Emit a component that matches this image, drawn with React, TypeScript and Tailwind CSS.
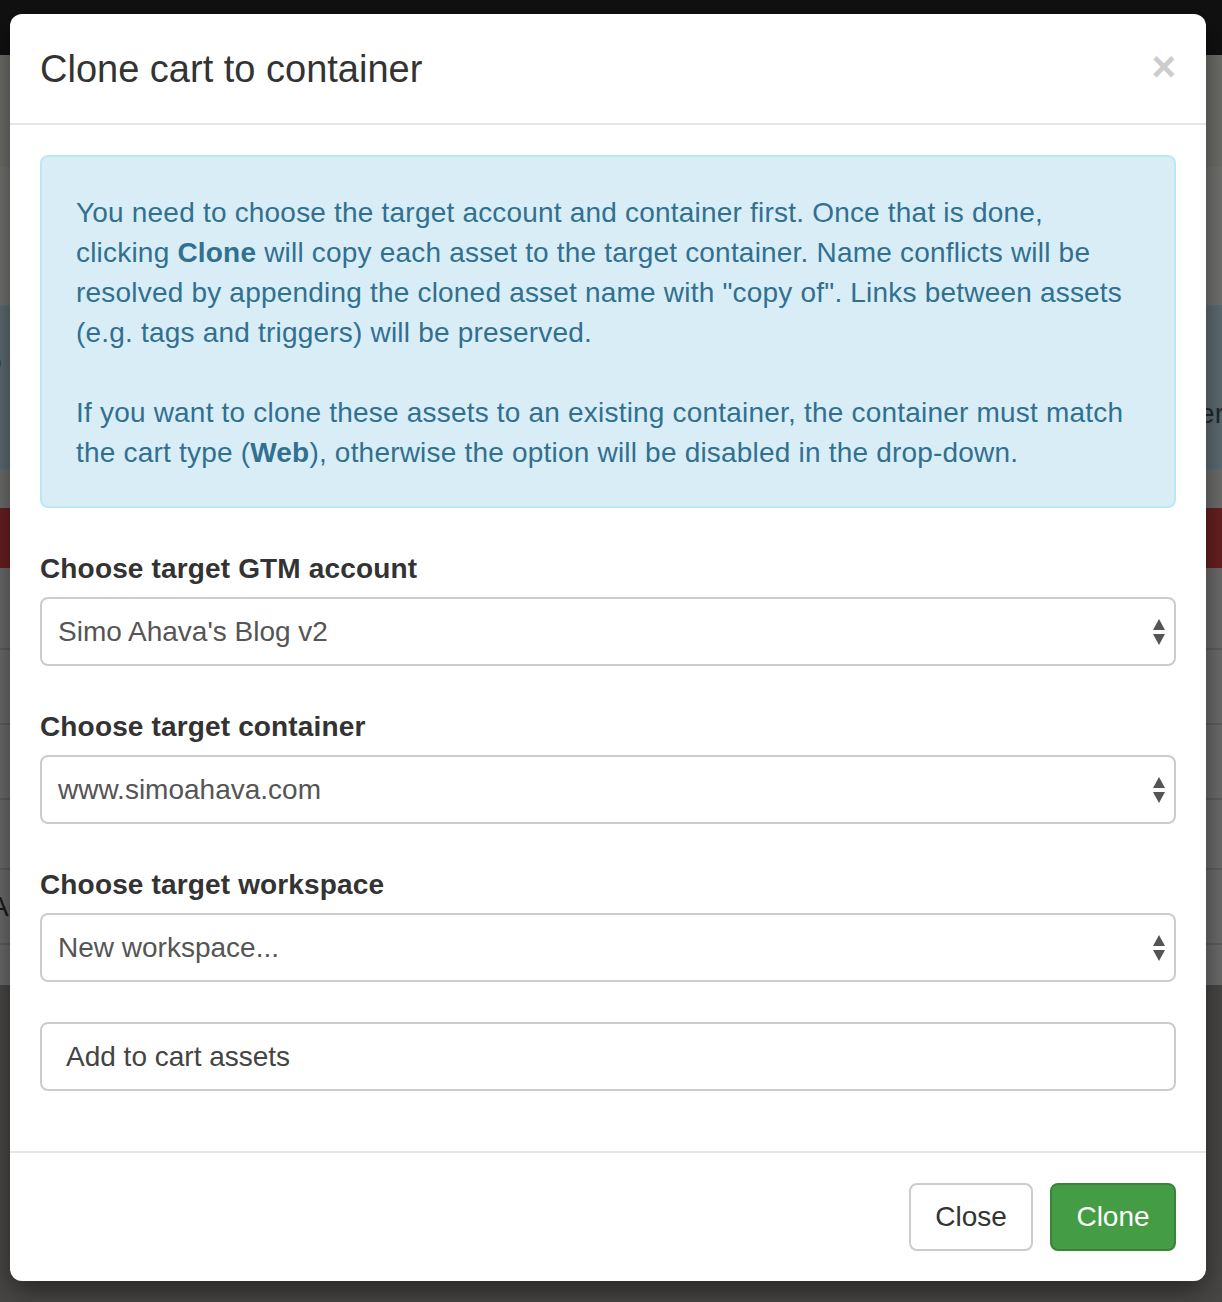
import React from "react";

const font = { fontFamily: '"Liberation Sans", Arial, Helvetica, sans-serif' };

function Arrows() {
  return (
    <svg width="14" height="28" viewBox="0 0 14 28" className="shrink-0">
      <path d="M7 1 L13 12 L1 12 Z" fill="#555" />
      <path d="M1 16 L13 16 L7 27 Z" fill="#555" />
    </svg>
  );
}

function Select({ value }: { value: string }) {
  return (
    <div className="flex h-[69px] items-center justify-between rounded-[8px] border-2 border-[#cccccc] bg-white pl-[16px] pr-[8px] text-[28px] text-[#555555]">
      <span>{value}</span>
      <Arrows />
    </div>
  );
}

function Label({ children }: { children: React.ReactNode }) {
  return <div className="mb-[8px] text-[28px] font-bold leading-[40px] tracking-[0.15px] text-[#333333]">{children}</div>;
}

export default function App() {
  return (
    <div className="relative h-[1302px] w-[1222px] overflow-hidden" style={font}>
      {/* background page, dimmed */}
      <div className="flex h-full flex-col">
        <div className="h-[55px] bg-[#111111]" />
        <div className="h-[112px] bg-[#6f6f6b]" />
        <div className="h-[138px] bg-[#737371]" />
        <div className="flex h-[165px] items-center justify-between border-y-2 border-[#5a7178] bg-[#5f6d73] text-[28px] text-[#1f2a2e]">
          <div className="-ml-[14px] flex flex-col leading-[52px]">
            <span>o</span>
            <span>s</span>
          </div>
          <div className="-mr-[2px] mt-[52px]">er</div>
        </div>
        <div className="h-[38px] bg-[#6f6f6d]" />
        <div className="h-[60px] bg-[#6a2020]" />
        <div className="h-[82px] border-b-2 border-[#5f5f5f] bg-[#6d6d6d]" />
        <div className="h-[75px] border-b-2 border-[#5f5f5f] bg-[#6d6d6d]" />
        <div className="h-[75px] border-b-2 border-[#5f5f5f] bg-[#6d6d6d]" />
        <div className="h-[70px] border-b-2 border-[#5f5f5f] bg-[#6d6d6d]" />
        <div className="flex h-[75px] items-center border-b-2 border-[#5f5f5f] bg-[#6d6d6d] text-[28px] text-[#1a1a1a]">
          <span className="-ml-[10px]">Ac</span>
        </div>
        <div className="h-[40px] bg-[#6d6d6d]" />
        <div className="flex-1 bg-[#4a4847]" />
      </div>

      {/* modal */}
      <div className="absolute left-[10px] top-[14px] flex w-[1196px] flex-col rounded-[12px] bg-white shadow-[0_10px_30px_rgba(0,0,0,0.5)]">
        <div className="flex h-[111px] items-center justify-between border-b-2 border-[#e5e5e5] pl-[30px] pr-[30px]">
          <h4 className="text-[38px] leading-[44px] text-[#333333]">Clone cart to container</h4>
          <span className="-mt-[4px] text-[42px] font-bold leading-[42px] text-[#cccccc]">×</span>
        </div>

        <div className="px-[30px] pt-[30px]">
          <div className="rounded-[8px] border-2 border-[#bce8f1] bg-[#d9edf7] pb-[33px] pl-[34px] pr-[20px] pt-[36px] text-[28px] leading-[40px] tracking-[0.2px] text-[#31708f]">
            <p className="whitespace-nowrap">
              You need to choose the target account and container first. Once that is done,
              <br />
              clicking <b>Clone</b> will copy each asset to the target container. Name conflicts will be
              <br />
              resolved by appending the cloned asset name with "copy of". Links between assets
              <br />
              (e.g. tags and triggers) will be preserved.
              <br />
              <br />
              If you want to clone these assets to an existing container, the container must match
              <br />
              the cart type (<b>Web</b>), otherwise the option will be disabled in the drop-down.
            </p>
          </div>

          <div className="mt-[41px] flex flex-col">
            <Label>Choose target GTM account</Label>
            <Select value="Simo Ahava's Blog v2" />
          </div>
          <div className="mt-[41px] flex flex-col">
            <Label>Choose target container</Label>
            <Select value="www.simoahava.com" />
          </div>
          <div className="mt-[41px] flex flex-col">
            <Label>Choose target workspace</Label>
            <Select value="New workspace..." />
          </div>
          <div className="mt-[40px] flex h-[69px] items-center rounded-[8px] border-2 border-[#cccccc] bg-white pl-[24px] text-[28px] text-[#444444]">
            Add to cart assets
          </div>
          <div className="h-[60px]" />
        </div>

        <div className="flex items-center justify-end gap-[17px] border-t-2 border-[#e5e5e5] px-[30px] pb-[30px] pt-[30px]">
          <button className="flex h-[68px] w-[124px] items-center justify-center rounded-[8px] border-2 border-[#cccccc] bg-white text-[28px] text-[#333333]">
            Close
          </button>
          <button className="flex h-[68px] w-[126px] items-center justify-center rounded-[8px] border-2 border-[#398439] bg-[#449d44] text-[28px] text-white">
            Clone
          </button>
        </div>
      </div>
    </div>
  );
}
